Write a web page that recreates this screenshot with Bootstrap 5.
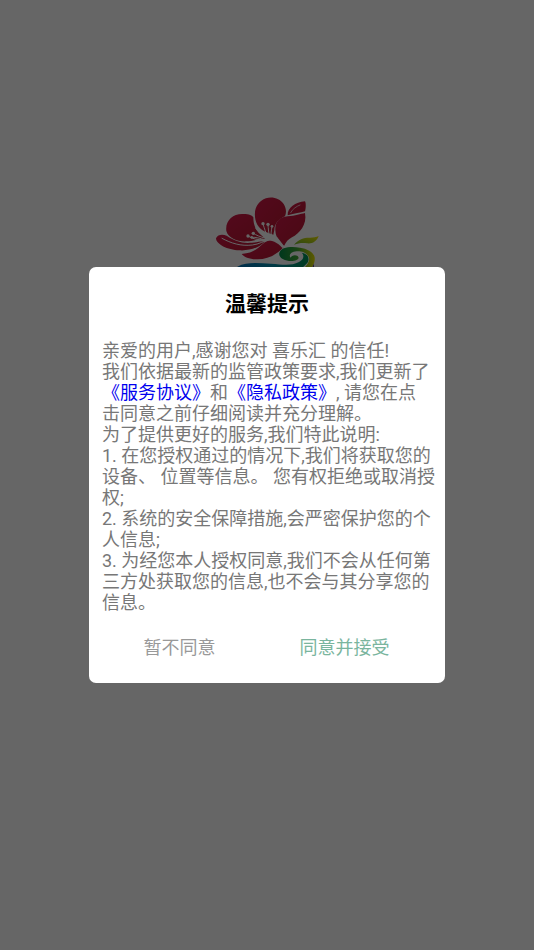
<!DOCTYPE html>
<html lang="zh-CN">
<head>
<meta charset="utf-8">
<meta name="viewport" content="width=device-width, initial-scale=1">
<title>温馨提示</title>
<link href="https://cdn.jsdelivr.net/npm/bootstrap@5.3.0/dist/css/bootstrap.min.css" rel="stylesheet">
<style>
body { font-family: Roboto, "Noto Sans CJK SC", sans-serif; background: #fff; }
.splash { padding-top: 185px; }
.splash svg { width: 120px; height: 90px; }
.shade { background: rgba(0, 0, 0, .6); }
.notice { border-radius: 7px; padding: 22px 0 14px; }
.notice-title { font-size: 21px; line-height: 30px; font-weight: 700; color: #000; margin-bottom: 21px; }
.notice-text { font-size: 18px; line-height: 21px; color: #777; padding: 0 8px 0 13px; margin-bottom: 13px; }
.notice-text a { color: #0000ee; }
.choices { padding: 0 18px 0 8px; }
.choice { font-size: 18px; line-height: 27px; padding: 8px 0; border: 0; }
.choice-no { color: #999; }
.choice-yes { color: #7ab59e; }
</style>
</head>
<body>
<main class="splash d-flex justify-content-center">
  <svg viewBox="0 0 360 270" role="img" aria-label="喜乐汇">
    <defs>
      <linearGradient id="petal" x1="0" y1="0" x2="1" y2="1">
        <stop offset="0" stop-color="#d01848"/><stop offset="1" stop-color="#b81830"/>
      </linearGradient>
      <linearGradient id="leaf" x1="0" y1="1" x2="1" y2="0">
        <stop offset="0" stop-color="#6cb52d"/><stop offset="1" stop-color="#f2e500"/>
      </linearGradient>
      <linearGradient id="swirl" x1="0" y1="0" x2="1" y2="0">
        <stop offset="0" stop-color="#008a48"/><stop offset=".5" stop-color="#3fa535"/><stop offset="1" stop-color="#e6e000"/>
      </linearGradient>
      <linearGradient id="wave" x1="0" y1="0" x2="1" y2="0">
        <stop offset="0" stop-color="#0071b8"/><stop offset=".5" stop-color="#008fae"/><stop offset="1" stop-color="#009352"/>
      </linearGradient>
    </defs>
    <g fill="url(#petal)">
      <path d="M58 138C54 108 77 87 105 87C123 86 136 90 139 97C139 112 142 124 149 136C156 147 166 153 175 162C149 162 135 169 119 169C94 171 64 160 58 138Z"/>
      <path d="M151 119C138 94 142 62 163 47C184 31 216 36 230 57C239 71 238 85 234 94C215 102 202 117 202 135L199 149C185 144 163 139 151 119Z"/>
      <path d="M242 91C241 68 265 51 294 49C298 56 296 74 294 79C281 83 263 86 242 91Z"/>
      <path d="M206 145C200 111 218 96 242 94C265 92 280 87 294 84C301 119 277 146 255 157C243 163 237 171 231 183C221 176 209 160 206 145Z"/>
      <path d="M27 160C32 147 48 147 59 152C80 166 99 173 122 174C143 174 157 169 173 170C156 188 128 198 97 196C62 195 27 178 27 160Z"/>
      <path d="M104 207C137 205 151 192 166 178C184 162 203 163 215 170L229 187C212 207 183 224 149 223C127 223 111 216 104 207Z"/>
    </g>
    <g fill="none" stroke="#fff" stroke-linecap="round">
      <path d="M45 160C72 175 102 184 136 180C156 178 170 168 190 163" stroke-width="3"/>
      <path d="M251 83C256 72 270 63 279 60" stroke-width="2"/>
      <path d="M190 161C184 145 184 130 183 119M184 158C175 142 173 132 168 117M178 156C164 147 157 139 152 130M176 160C159 155 147 151 140 145M174 164C157 160 147 156 136 157M172 166C151 163 137 163 125 154M193 158C191 147 193 136 195 125" stroke-width="3"/>
    </g>
    <path d="M171 165C177 152 190 146 202 152L211 157L233 185L226 189C211 170 190 164 171 165Z" fill="#fff"/>
    <g fill="#fff">
      <circle cx="183" cy="118" r="5"/><circle cx="168" cy="116" r="5"/><circle cx="151" cy="130" r="5"/><circle cx="139" cy="145" r="5"/><circle cx="134" cy="157" r="4"/><circle cx="123" cy="153" r="5"/><circle cx="195" cy="124" r="4"/>
    </g>
    <path d="M261 179C275 162 294 157 310 158C319 158 328 156 335 153C329 170 315 177 300 175C285 173 274 175 261 179Z" fill="url(#leaf)"/>
    <path d="M91 245C121 229 156 235 192 236C228 239 253 243 276 231C290 225 293 211 284 203C303 205 310 222 300 235C285 253 265 263 238 263L91 263Z" fill="url(#wave)"/>
    <path d="M246 228C226 226 214 214 217 204C222 186 251 184 279 188C302 191 320 202 323 217C325 234 316 248 302 262L276 262C293 249 309 233 306 219C301 203 284 198 269 199C251 200 244 212 251 218C253 211 265 208 272 213C281 222 267 230 246 228Z" fill="url(#swirl)"/>
    <path d="M304 263C313 256 317 246 320 236C323 250 316 258 312 263Z" fill="#38207a"/>
  </svg>
</main>

<div class="modal d-block shade" role="dialog" aria-modal="true" aria-labelledby="noticeTitle" tabindex="-1">
  <div class="container-fluid p-0 min-vh-100 d-flex align-items-center justify-content-center">
    <div class="col-8">
      <section class="notice bg-white">
        <h1 class="notice-title text-center" id="noticeTitle">温馨提示</h1>
        <div class="notice-text">
          亲爱的用户,感谢您对 喜乐汇 的信任!<br>
          我们依据最新的监管政策要求,我们更新了<a class="text-decoration-none" href="#service">《服务协议》</a>和<a class="text-decoration-none" href="#privacy">《隐私政策》</a>, 请您在点<br>击同意之前仔细阅读并充分理解。<br>
          为了提供更好的服务,我们特此说明:<br>
          1. 在您授权通过的情况下,我们将获取您的设备、 位置等信息。 您有权拒绝或取消授权;<br>
          2. 系统的安全保障措施,会严密保护您的个人信息;<br>
          3. 为经您本人授权同意,我们不会从任何第三方处获取您的信息,也不会与其分享您的信息。
        </div>
        <div class="choices d-flex">
          <button type="button" class="choice choice-no btn w-50">暂不同意</button>
          <button type="button" class="choice choice-yes btn w-50">同意并接受</button>
        </div>
      </section>
    </div>
  </div>
</div>
<script src="https://cdn.jsdelivr.net/npm/bootstrap@5.3.0/dist/js/bootstrap.bundle.min.js"></script>
</body>
</html>
